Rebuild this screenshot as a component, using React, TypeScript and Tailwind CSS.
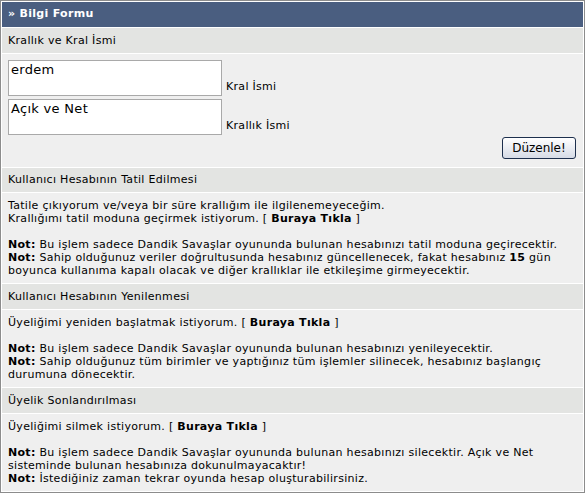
import React from 'react';

// Account settings form ("Bilgi Formu") in the old-school table look
const Section: React.FC<{ title: string }> = ({ title }) => (
  <div className="h-[25px] bg-[#e3e4e2] px-[6px] flex items-center leading-[13px]">{title}</div>
);

const App: React.FC = () => {
  return (
    <div className="w-[585px] h-[493px] border border-[#8c8c8c] bg-white p-px flex flex-col gap-px font-['DejaVu_Sans',Verdana,sans-serif] text-[11px] tracking-[0.3px] text-black">
      <div className="h-[25px] bg-[#4a5e80] px-[6px] flex items-center font-bold text-white">» Bilgi Formu</div>

      <Section title="Krallık ve Kral İsmi" />
      <div className="bg-[#efefef] px-[6px] pt-[6px] pb-[8px] flex flex-col">
        <div className="flex items-end gap-[4px]">
          <textarea
            defaultValue="erdem"
            className="w-[214px] h-[36px] resize-none border border-[#a9a9a9] bg-white px-[2px] py-[1px] text-[13px] leading-[15px] tracking-[0.3px] outline-none font-['DejaVu_Sans',Verdana,sans-serif]"
          />
          <span className="mb-[3px] leading-[13px]">Kral İsmi</span>
        </div>
        <div className="flex items-end gap-[4px] mt-[3px]">
          <textarea
            defaultValue="Açık ve Net"
            className="w-[214px] h-[36px] resize-none border border-[#a9a9a9] bg-white px-[2px] py-[1px] text-[13px] leading-[15px] tracking-[0.3px] outline-none font-['DejaVu_Sans',Verdana,sans-serif]"
          />
          <span className="mb-[3px] leading-[13px]">Krallık İsmi</span>
        </div>
        <div className="flex justify-end mt-[2px] pr-[1px]">
          <button className="w-[74px] h-[22px] rounded-[3px] border border-[#1d2f4d] bg-gradient-to-b from-white to-[#d6dbe6] text-[12px] leading-[14px] tracking-normal font-['DejaVu_Sans',Tahoma,sans-serif]">
            Düzenle!
          </button>
        </div>
      </div>

      <Section title="Kullanıcı Hesabının Tatil Edilmesi" />
      <div className="bg-[#efefef] px-[6px] py-[6px] leading-[13px]">
        <p>Tatile çıkıyorum ve/veya bir süre krallığım ile ilgilenemeyeceğim.</p>
        <p>Krallığımı tatil moduna geçirmek istiyorum. [ <b>Buraya Tıkla</b> ]</p>
        <p>&nbsp;</p>
        <p><b>Not:</b> Bu işlem sadece Dandik Savaşlar oyununda bulunan hesabınızı tatil moduna geçirecektir.</p>
        <p>
          <b>Not:</b> Sahip olduğunuz veriler doğrultusunda hesabınız güncellenecek, fakat hesabınız <b>15</b> gün boyunca kullanıma kapalı olacak ve diğer krallıklar ile etkileşime girmeyecektir.
        </p>
      </div>

      <Section title="Kullanıcı Hesabının Yenilenmesi" />
      <div className="bg-[#efefef] px-[6px] py-[6px] leading-[13px]">
        <p>Üyeliğimi yeniden başlatmak istiyorum. [ <b>Buraya Tıkla</b> ]</p>
        <p>&nbsp;</p>
        <p><b>Not:</b> Bu işlem sadece Dandik Savaşlar oyununda bulunan hesabınızı yenileyecektir.</p>
        <p><b>Not:</b> Sahip olduğunuz tüm birimler ve yaptığınız tüm işlemler silinecek, hesabınız başlangıç durumuna dönecektir.</p>
      </div>

      <Section title="Üyelik Sonlandırılması" />
      <div className="flex-1 bg-[#efefef] px-[6px] py-[6px] leading-[13px]">
        <p>Üyeliğimi silmek istiyorum. [ <b>Buraya Tıkla</b> ]</p>
        <p>&nbsp;</p>
        <p><b>Not:</b> Bu işlem sadece Dandik Savaşlar oyununda bulunan hesabınızı silecektir. Açık ve Net sisteminde bulunan hesabınıza dokunulmayacaktır!</p>
        <p><b>Not:</b> İstediğiniz zaman tekrar oyunda hesap oluşturabilirsiniz.</p>
      </div>
    </div>
  );
};

export default App;
